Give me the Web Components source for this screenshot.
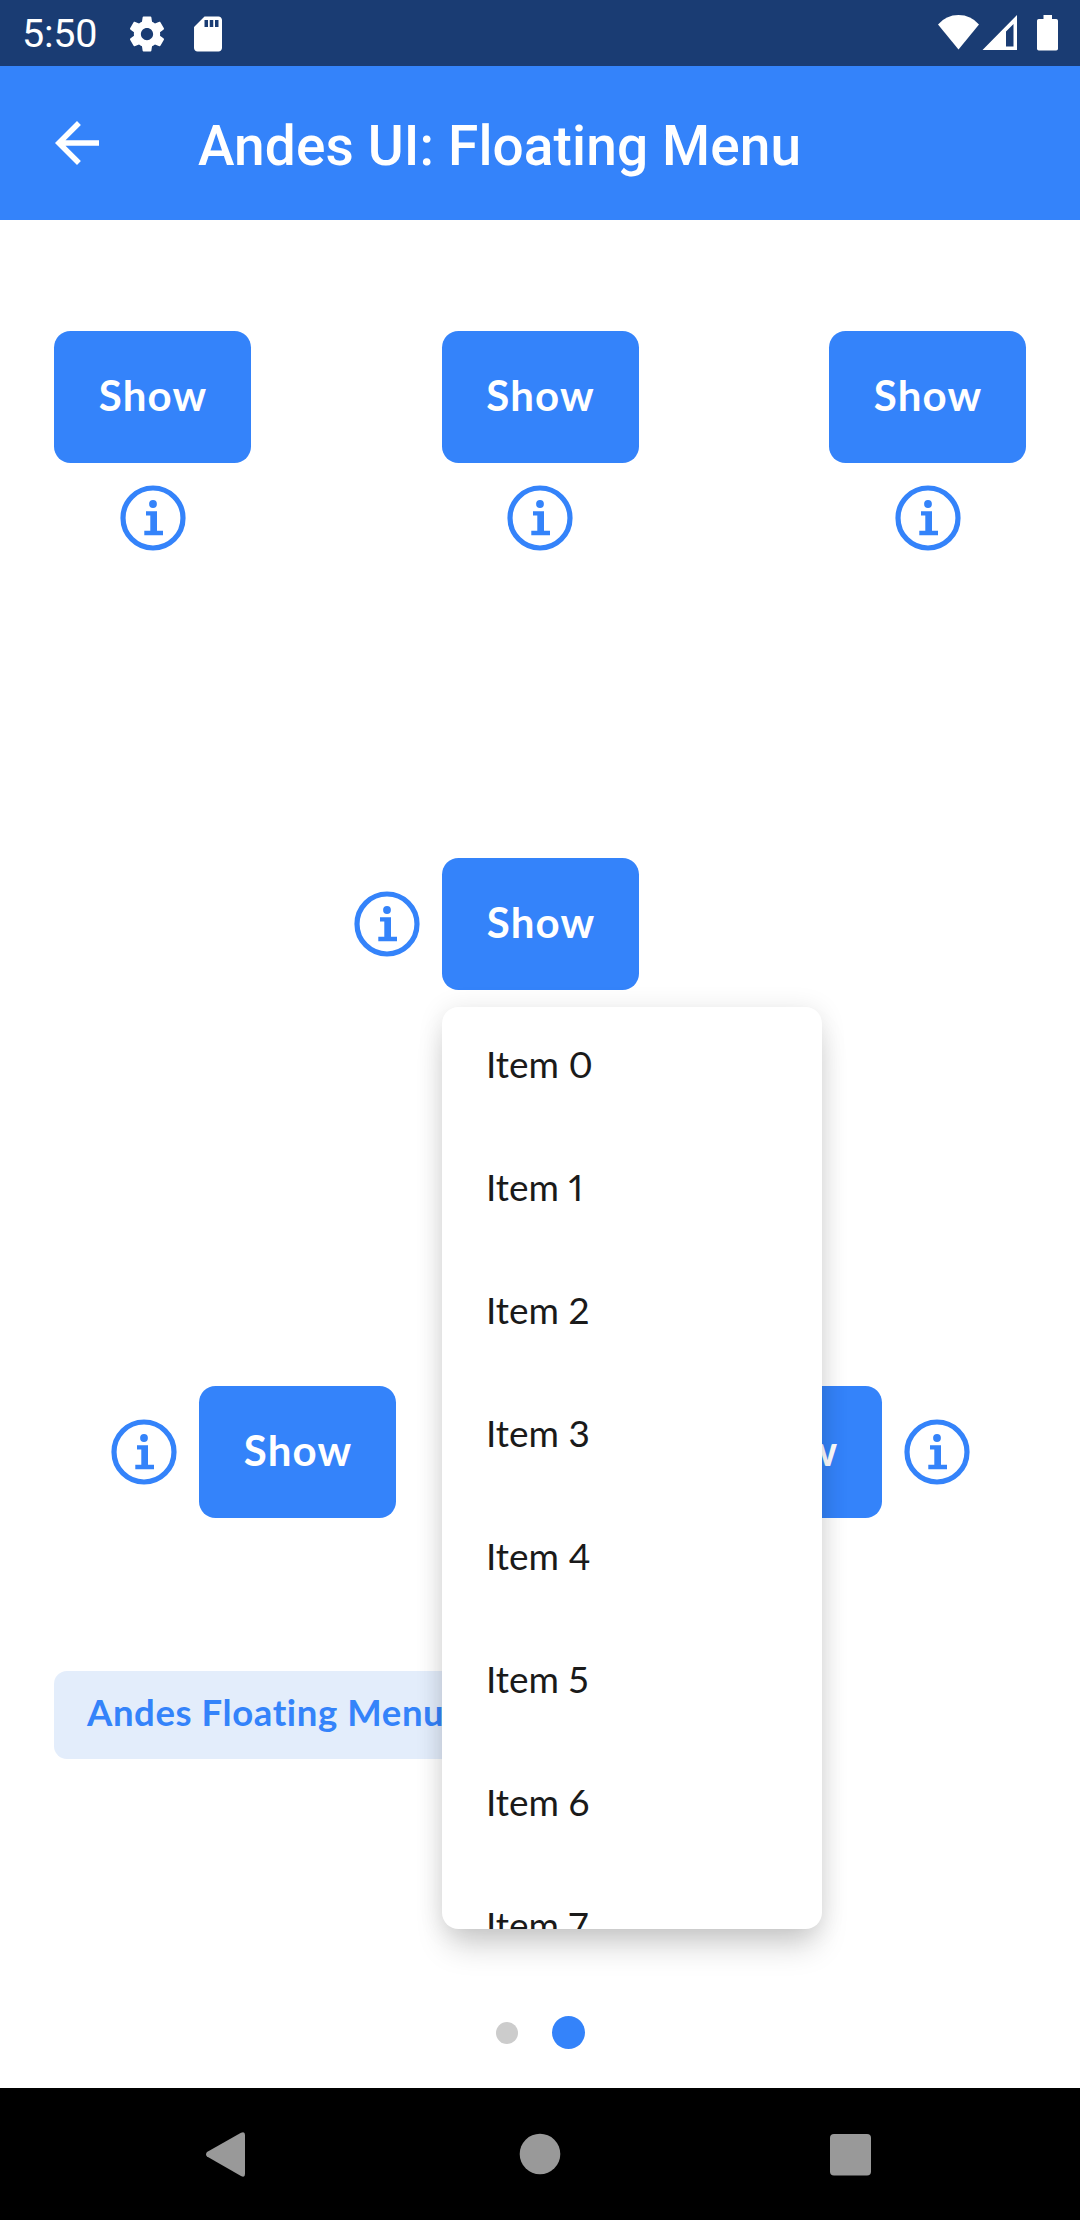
<!DOCTYPE html>
<html lang="en">
<head>
<meta charset="utf-8">
<title>Andes UI: Floating Menu</title>
<style>
  html, body { margin: 0; padding: 0; background: #fff; }
  body { width: 1080px; height: 2220px; overflow: hidden; font-family: Lato, "Open Sans", sans-serif; font-variant-ligatures: none; }
</style>
</head>
<body>
<demo-screen></demo-screen>
<script>
const define = (name, html) => {
  const template = document.createElement('template');
  template.innerHTML = html;
  customElements.define(name, class extends HTMLElement {
    constructor() {
      super();
      this.attachShadow({ mode: 'open' }).append(template.content.cloneNode(true));
    }
  });
};

define('status-bar', `
  <style>
    :host { display: flex; justify-content: space-between; height: 66px; box-sizing: border-box; padding: 0 22px 0 22px; background: #1a3c73; color: #fff; font: 400 39.5px/68px Roboto, sans-serif; }
    div { display: flex; align-items: flex-start; }
    svg { display: block; fill: #fff; }
    .time { width: 103.5px; letter-spacing: -.2px; }
    .gear, .card { margin-top: 12.5px; }
    .card { margin-left: 19px; }
    .right { padding-top: 14px; }
  </style>
  <div>
    <span class="time">5:50</span>
    <svg class="gear" width="42" height="42" viewBox="0 0 24 24"><path d="M19.43 12.98c.04-.32.07-.64.07-.98s-.03-.66-.07-.98l2.11-1.65c.19-.15.24-.42.12-.64l-2-3.46c-.12-.22-.39-.3-.61-.22l-2.49 1c-.52-.4-1.08-.73-1.69-.98l-.38-2.65C14.46 2.18 14.25 2 14 2h-4c-.25 0-.46.18-.49.42l-.38 2.65c-.61.25-1.17.59-1.69.98l-2.49-1c-.23-.09-.49 0-.61.22l-2 3.46c-.13.22-.07.49.12.64l2.11 1.65c-.04.32-.07.65-.07.98s.03.66.07.98l-2.11 1.65c-.19.15-.24.42-.12.64l2 3.46c.12.22.39.3.61.22l2.49-1c.52.4 1.08.73 1.69.98l.38 2.65c.03.24.24.42.49.42h4c.25 0 .46-.18.49-.42l.38-2.65c.61-.25 1.17-.59 1.69-.98l2.49 1c.23.09.49 0 .61-.22l2-3.46c.12-.22.07-.49-.12-.64l-2.11-1.65zM12 15.5c-1.93 0-3.5-1.57-3.5-3.5s1.57-3.5 3.5-3.5 3.5 1.57 3.5 3.5-1.57 3.5-3.5 3.5z"/></svg>
    <svg class="card" width="42" height="42" viewBox="0 0 24 24"><path d="M18 2h-8L4.02 8 4 20c0 1.1.9 2 2 2h12c1.1 0 2-.9 2-2V4c0-1.1-.9-2-2-2zm-6 6h-2V4h2v4zm3 0h-2V4h2v4zm3 0h-2V4h2v4z"/></svg>
  </div>
  <div class="right">
    <svg width="120" height="38" viewBox="938 14 120 38">
      <path d="M958.5 49.5 938 24.5Q946 15 958.5 15T979 24.5Z"/>
      <path fill-rule="evenodd" d="M982.5 50 1017 15V50ZM1006 46.5H1013.5V24L1006 31.5Z"/>
      <path d="M1043.5 15h8.5v4h4.2q1.8 0 1.8 1.8v28q0 1.8-1.8 1.8h-17.4q-1.8 0-1.8-1.8v-28q0-1.8 1.8-1.8h4.7z"/>
    </svg>
  </div>`);

define('app-bar', `
  <style>
    :host { display: flex; align-items: flex-start; height: 154px; box-sizing: border-box; padding: 44px 0 0 44px; background: #3483fa; color: #fff; font: 500 55px/73px Roboto, sans-serif; letter-spacing: .12px; }
    svg { display: block; fill: #fff; margin-right: 88px; }
    .title { white-space: nowrap; }
  </style>
  <svg width="66" height="66" viewBox="0 0 24 24"><path d="M20 11H7.83l5.59-5.59L12 4l-8 8 8 8 1.41-1.41L7.83 13H20v-2z"/></svg>
  <span class="title"><slot></slot></span>`);

define('andes-button', `
  <style>
    :host { display: block; position: relative; width: 197px; height: 132px; }
    .face { display: flex; justify-content: center; height: 132px; border-radius: 16.5px; background: #3483fa; color: #fff; font-size: 42px; font-weight: 700; letter-spacing: 1.2px; text-indent: 1.2px; line-height: 128px; }
  </style>
  <div class="face"><span><slot></slot></span></div>
  <slot name="menu"></slot>`);

define('info-icon', `
  <style>:host { display: block; width: 66px; height: 66px; } svg { display: block; }</style>
  <svg width="66" height="66" viewBox="0 0 66 66" fill="#3483fa">
    <circle cx="33" cy="33" r="30" fill="none" stroke="#3483fa" stroke-width="5.2"/>
    <circle cx="33" cy="19" r="3.9"/>
    <path d="M26 26.2H37V45.8H43V50.2H24.3V45.8H30.3V30.4H26Z"/>
  </svg>`);

define('menu-item', `
  <style>:host { display: block; height: 123px; box-sizing: border-box; padding-left: 44px; color: #1a1a1a; font-size: 37px; font-weight: 400; font-variant-numeric: proportional-nums; line-height: 114px; }</style>
  <slot></slot>`);

define('floating-menu', `
  <style>
    :host { display: block; position: absolute; z-index: 5; top: 149px; left: 0; width: 380px; height: 922px; border-radius: 16.5px; background: #fff; box-shadow: 0 22px 32px -6px rgba(0,0,0,.18), 0 2px 26px rgba(0,0,0,.1); }
    .list { height: 100%; overflow: hidden; border-radius: inherit; }
  </style>
  <div class="list"><slot></slot></div>`);

define('andes-tag', `
  <style>:host { display: block; width: 428px; height: 88px; box-sizing: border-box; padding-left: 33px; border-radius: 13px; background: #e3edfb; color: #3483fa; font-size: 36.5px; font-weight: 700; letter-spacing: .6px; line-height: 83px; white-space: nowrap; }</style>
  <slot></slot>`);

define('page-dots', `
  <style>
    :host { display: flex; align-items: center; justify-content: center; gap: 34px; height: 33px; }
    i { width: 22px; height: 22px; border-radius: 50%; background: #ccc; }
    i.on { width: 33px; height: 33px; background: #3483fa; }
  </style>
  <i></i><i class="on"></i>`);

define('nav-bar', `
  <style>
    :host { display: block; height: 132px; background: #000; }
    svg { display: block; fill: #999; }
  </style>
  <svg width="1080" height="132" viewBox="0 2088 1080 132">
    <path d="M207 2152 241 2132.8Q245 2131 245 2135V2174Q245 2178 241 2176L207 2156.5Q205 2154.5 207 2152Z"/>
    <circle cx="540" cy="2154" r="20.3"/>
    <rect x="830" y="2134" width="41" height="41.5" rx="4"/>
  </svg>`);

define('demo-screen', `
  <style>
    :host { display: flex; flex-direction: column; width: 1080px; height: 2220px; background: #fff; }
    main { flex: 1; display: flex; flex-direction: column; padding-top: 111px; }
    .row { display: flex; justify-content: space-between; }
    .pair { display: flex; align-items: center; gap: 22px; }
    .below { flex-direction: column; }
    .top { padding: 0 54px; }
    .middle { padding-left: 354px; margin-top: 307px; }
    .bottom { padding: 0 110px 0 111px; margin-top: 396px; }
    andes-tag { margin: 153px 0 0 54px; }
    page-dots { margin-top: 257px; }
  </style>
  <status-bar></status-bar>
  <app-bar>Andes UI: Floating Menu</app-bar>
  <main>
    <div class="row top">
      <div class="pair below"><andes-button>Show</andes-button><info-icon></info-icon></div>
      <div class="pair below"><andes-button>Show</andes-button><info-icon></info-icon></div>
      <div class="pair below"><andes-button>Show</andes-button><info-icon></info-icon></div>
    </div>
    <div class="row middle">
      <div class="pair">
        <info-icon></info-icon>
        <andes-button>Show
          <floating-menu slot="menu">
            <menu-item>Item 0</menu-item>
            <menu-item>Item 1</menu-item>
            <menu-item>Item 2</menu-item>
            <menu-item>Item 3</menu-item>
            <menu-item>Item 4</menu-item>
            <menu-item>Item 5</menu-item>
            <menu-item>Item 6</menu-item>
            <menu-item>Item 7</menu-item>
          </floating-menu>
        </andes-button>
      </div>
    </div>
    <div class="row bottom">
      <div class="pair"><info-icon></info-icon><andes-button>Show</andes-button></div>
      <div class="pair"><andes-button>Show</andes-button><info-icon></info-icon></div>
    </div>
    <andes-tag>Andes Floating Menu</andes-tag>
    <page-dots></page-dots>
  </main>
  <nav-bar></nav-bar>`);
</script>
</body>
</html>
